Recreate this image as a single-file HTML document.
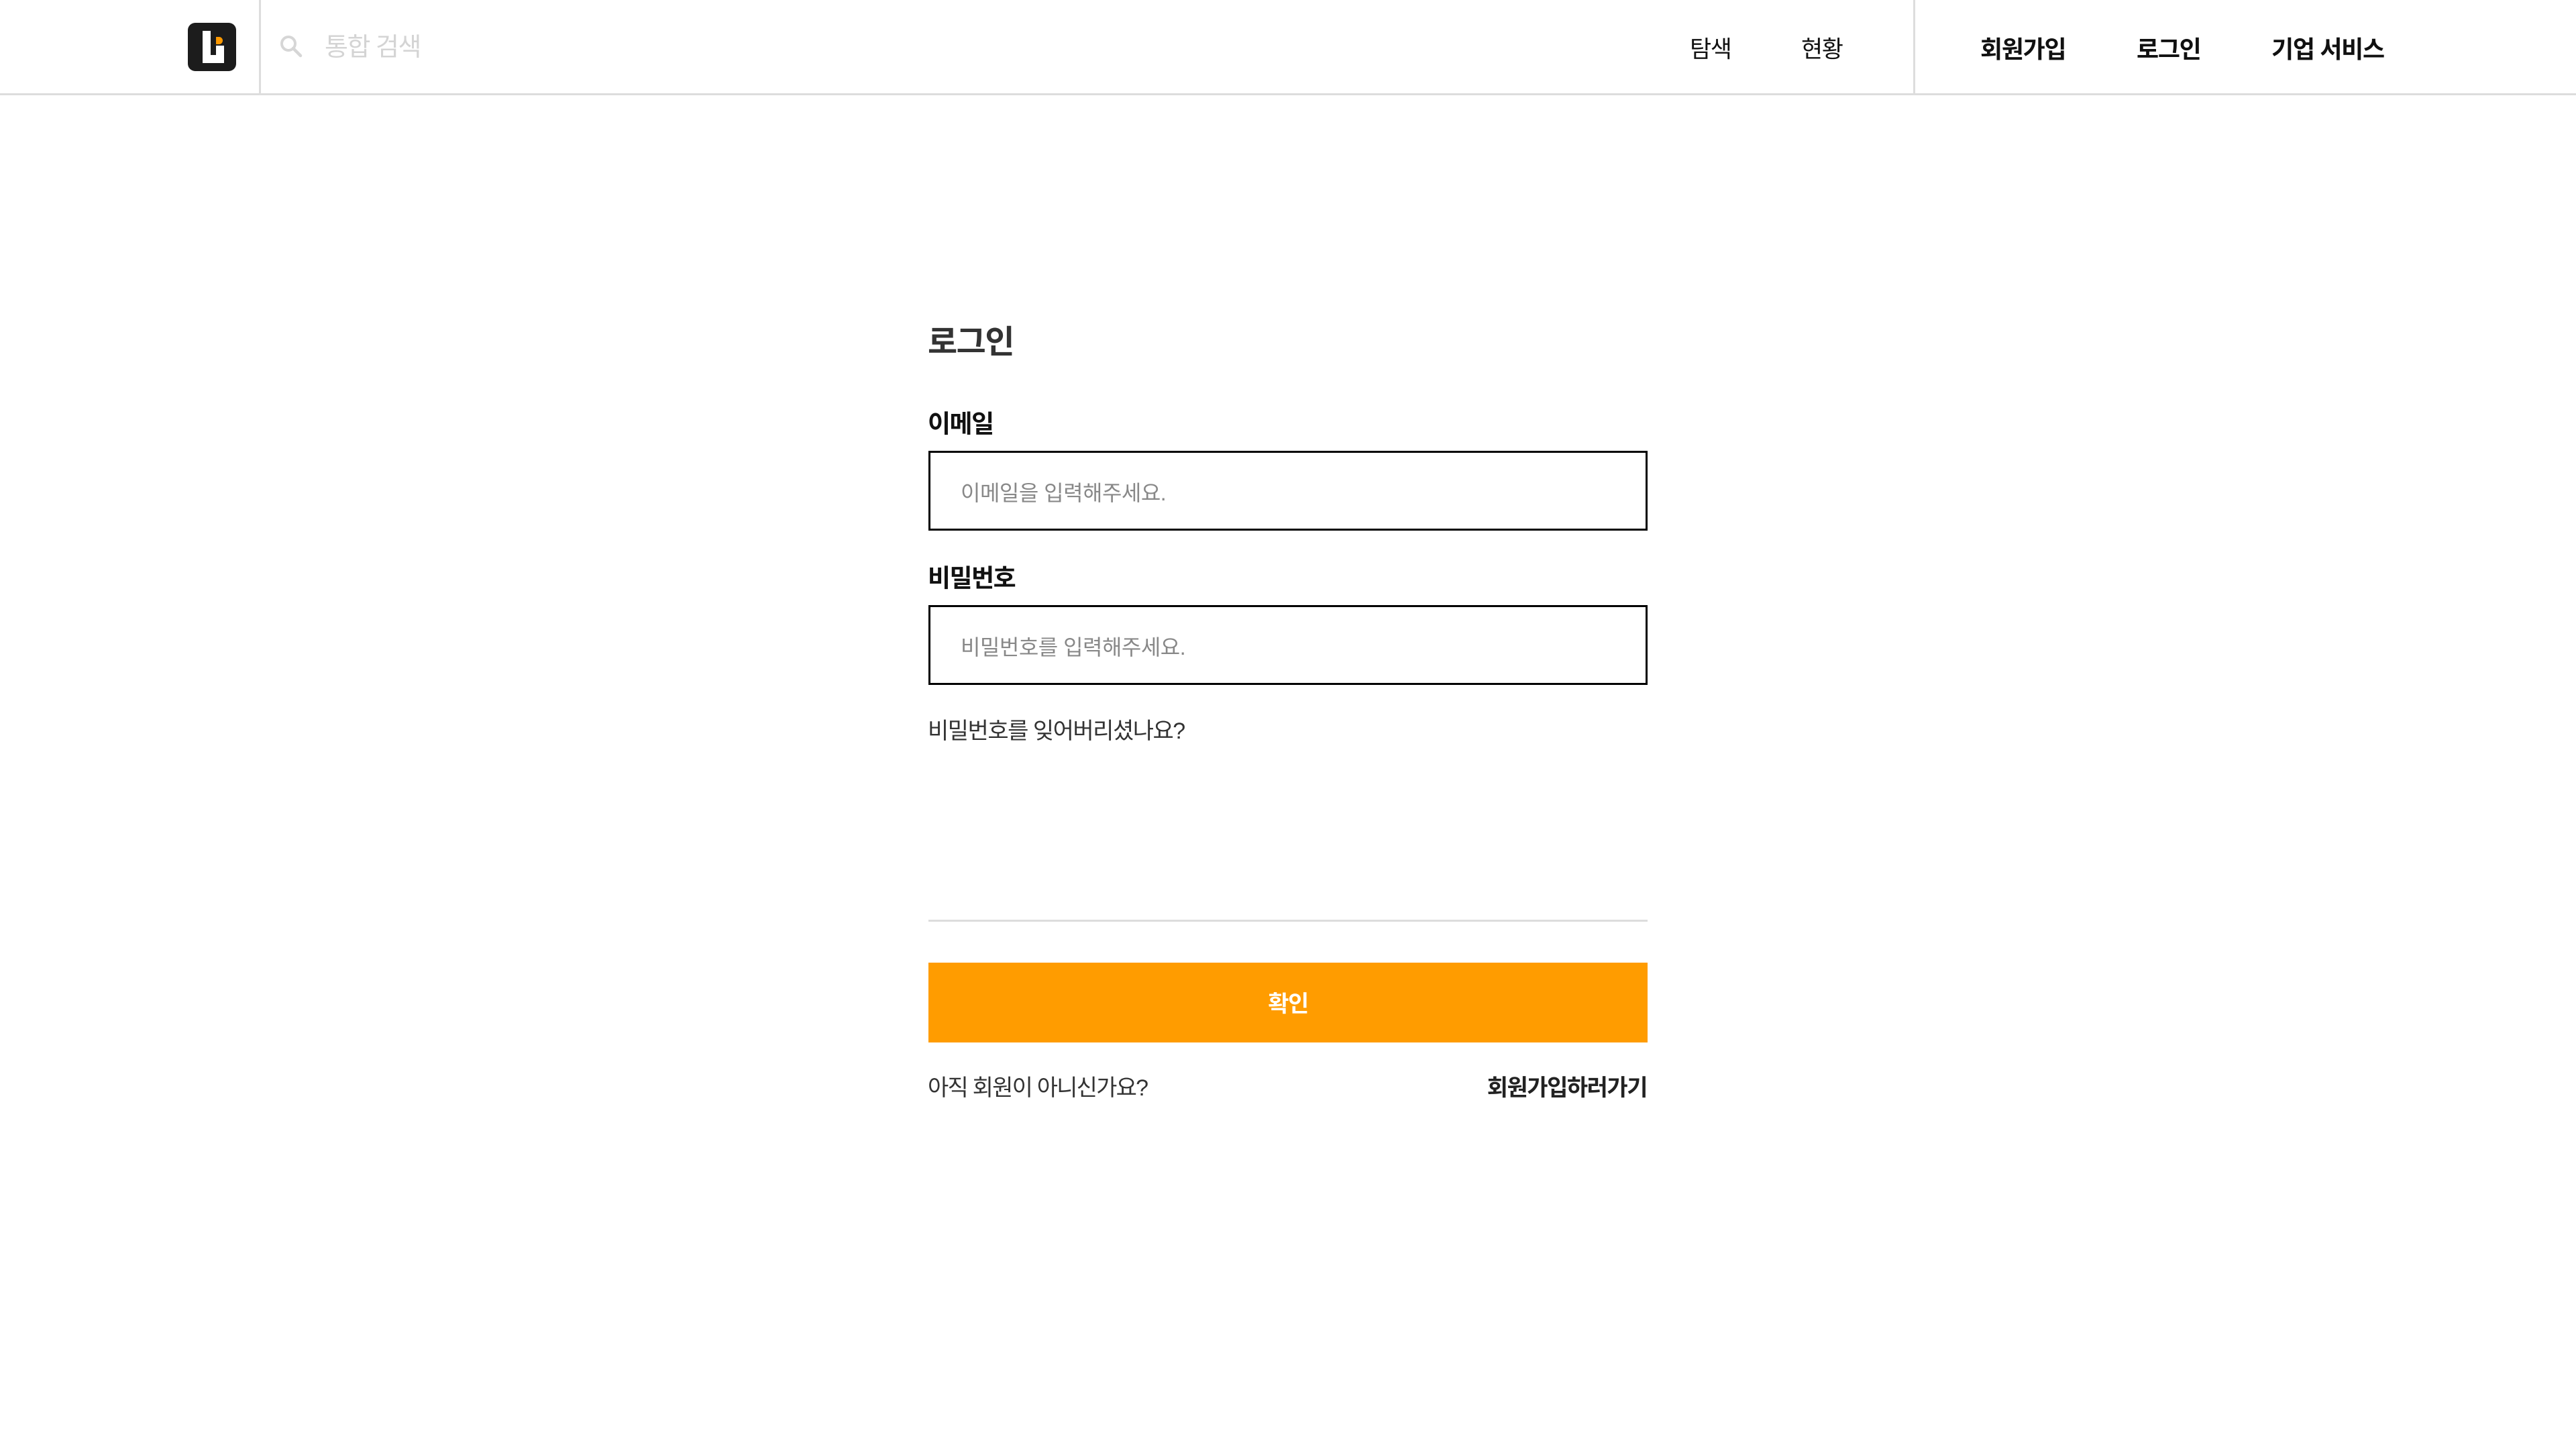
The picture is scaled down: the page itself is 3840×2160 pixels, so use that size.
<!DOCTYPE html>
<html><head><meta charset="utf-8"><style>
*{margin:0;padding:0;box-sizing:border-box}
body{width:3840px;height:2160px;background:#fff;position:relative;overflow:hidden;font-family:"Liberation Sans","Noto Sans CJK KR",sans-serif;color:#111}
.a{position:absolute;white-space:nowrap;line-height:1}
.c{transform:translateY(-50%)}
</style></head><body>
<div class="a" style="left:0;top:139px;width:3840px;height:3px;background:#ddd"></div>
<div class="a" style="left:280px;top:34px;width:72px;height:72px;background:#1c1c1c;border-radius:11px"></div>
<div class="a" style="left:302px;top:46px;width:12px;height:48px;background:#fff"></div>
<div class="a" style="left:302px;top:82px;width:32px;height:12px;background:#fff"></div>
<div class="a" style="left:322px;top:68px;width:12px;height:20px;background:#fff"></div>
<div class="a" style="left:322px;top:55px;width:10px;height:11px;background:#ff9900;border-radius:0 6px 6px 0"></div>
<div class="a" style="left:386px;top:0;width:3px;height:140px;background:#ddd"></div>
<svg class="a" style="left:415px;top:50px" width="40" height="40" viewBox="0 0 40 40"><circle cx="15" cy="15" r="10" fill="none" stroke="#d6d6d6" stroke-width="4"/><line x1="22" y1="22" x2="33" y2="33" stroke="#d6d6d6" stroke-width="4.5" stroke-linecap="round"/></svg>
<div class="a c" style="left:484px;top:71px;font-size:38px;color:#d4d4d4;letter-spacing:-1.5px">통합 검색</div>
<div class="a c" style="left:2519px;top:74px;font-size:35px;letter-spacing:-1.5px">탐색</div>
<div class="a c" style="left:2685px;top:74px;font-size:35px;letter-spacing:-1.5px">현황</div>
<div class="a" style="left:2852px;top:0;width:3px;height:140px;background:#ddd"></div>
<div class="a c" style="left:2952px;top:74px;font-size:36px;font-weight:bold;letter-spacing:-1.3px">회원가입</div>
<div class="a c" style="left:3185px;top:74px;font-size:36px;font-weight:bold;letter-spacing:-1.3px">로그인</div>
<div class="a c" style="left:3386px;top:74px;font-size:36px;font-weight:bold;letter-spacing:-1.3px">기업 서비스</div>

<div class="a c" style="left:1383px;top:511px;font-size:48px;font-weight:bold;color:#333;letter-spacing:-1.5px">로그인</div>
<div class="a c" style="left:1383px;top:632px;font-size:37px;font-weight:bold;letter-spacing:-1.5px">이메일</div>
<div class="a" style="left:1384px;top:672px;width:1072px;height:119px;border:3px solid #000"></div>
<div class="a c" style="left:1432px;top:735px;font-size:32px;color:#888;letter-spacing:-0.5px">이메일을 입력해주세요.</div>
<div class="a c" style="left:1383px;top:862px;font-size:37px;font-weight:bold;letter-spacing:-1.5px">비밀번호</div>
<div class="a" style="left:1384px;top:902px;width:1072px;height:119px;border:3px solid #000"></div>
<div class="a c" style="left:1432px;top:965px;font-size:32px;color:#888;letter-spacing:-0.5px">비밀번호를 입력해주세요.</div>
<div class="a c" style="left:1383px;top:1090px;font-size:34px;color:#333;letter-spacing:-1.5px">비밀번호를 잊어버리셨나요?</div>
<div class="a" style="left:1384px;top:1371px;width:1072px;height:3px;background:#ddd"></div>
<div class="a" style="left:1384px;top:1435px;width:1072px;height:119px;background:#ff9c00"></div>
<div class="a c" style="left:1384px;width:1072px;text-align:center;top:1497px;font-size:34px;font-weight:bold;color:#fff;letter-spacing:-1.5px">확인</div>
<div class="a c" style="left:1383px;top:1622px;font-size:34px;color:#333;letter-spacing:-1.8px">아직 회원이 아니신가요?</div>
<div class="a c" style="right:1385px;top:1622px;font-size:34px;font-weight:bold;color:#222;letter-spacing:-1.5px">회원가입하러가기</div>
</body></html>
